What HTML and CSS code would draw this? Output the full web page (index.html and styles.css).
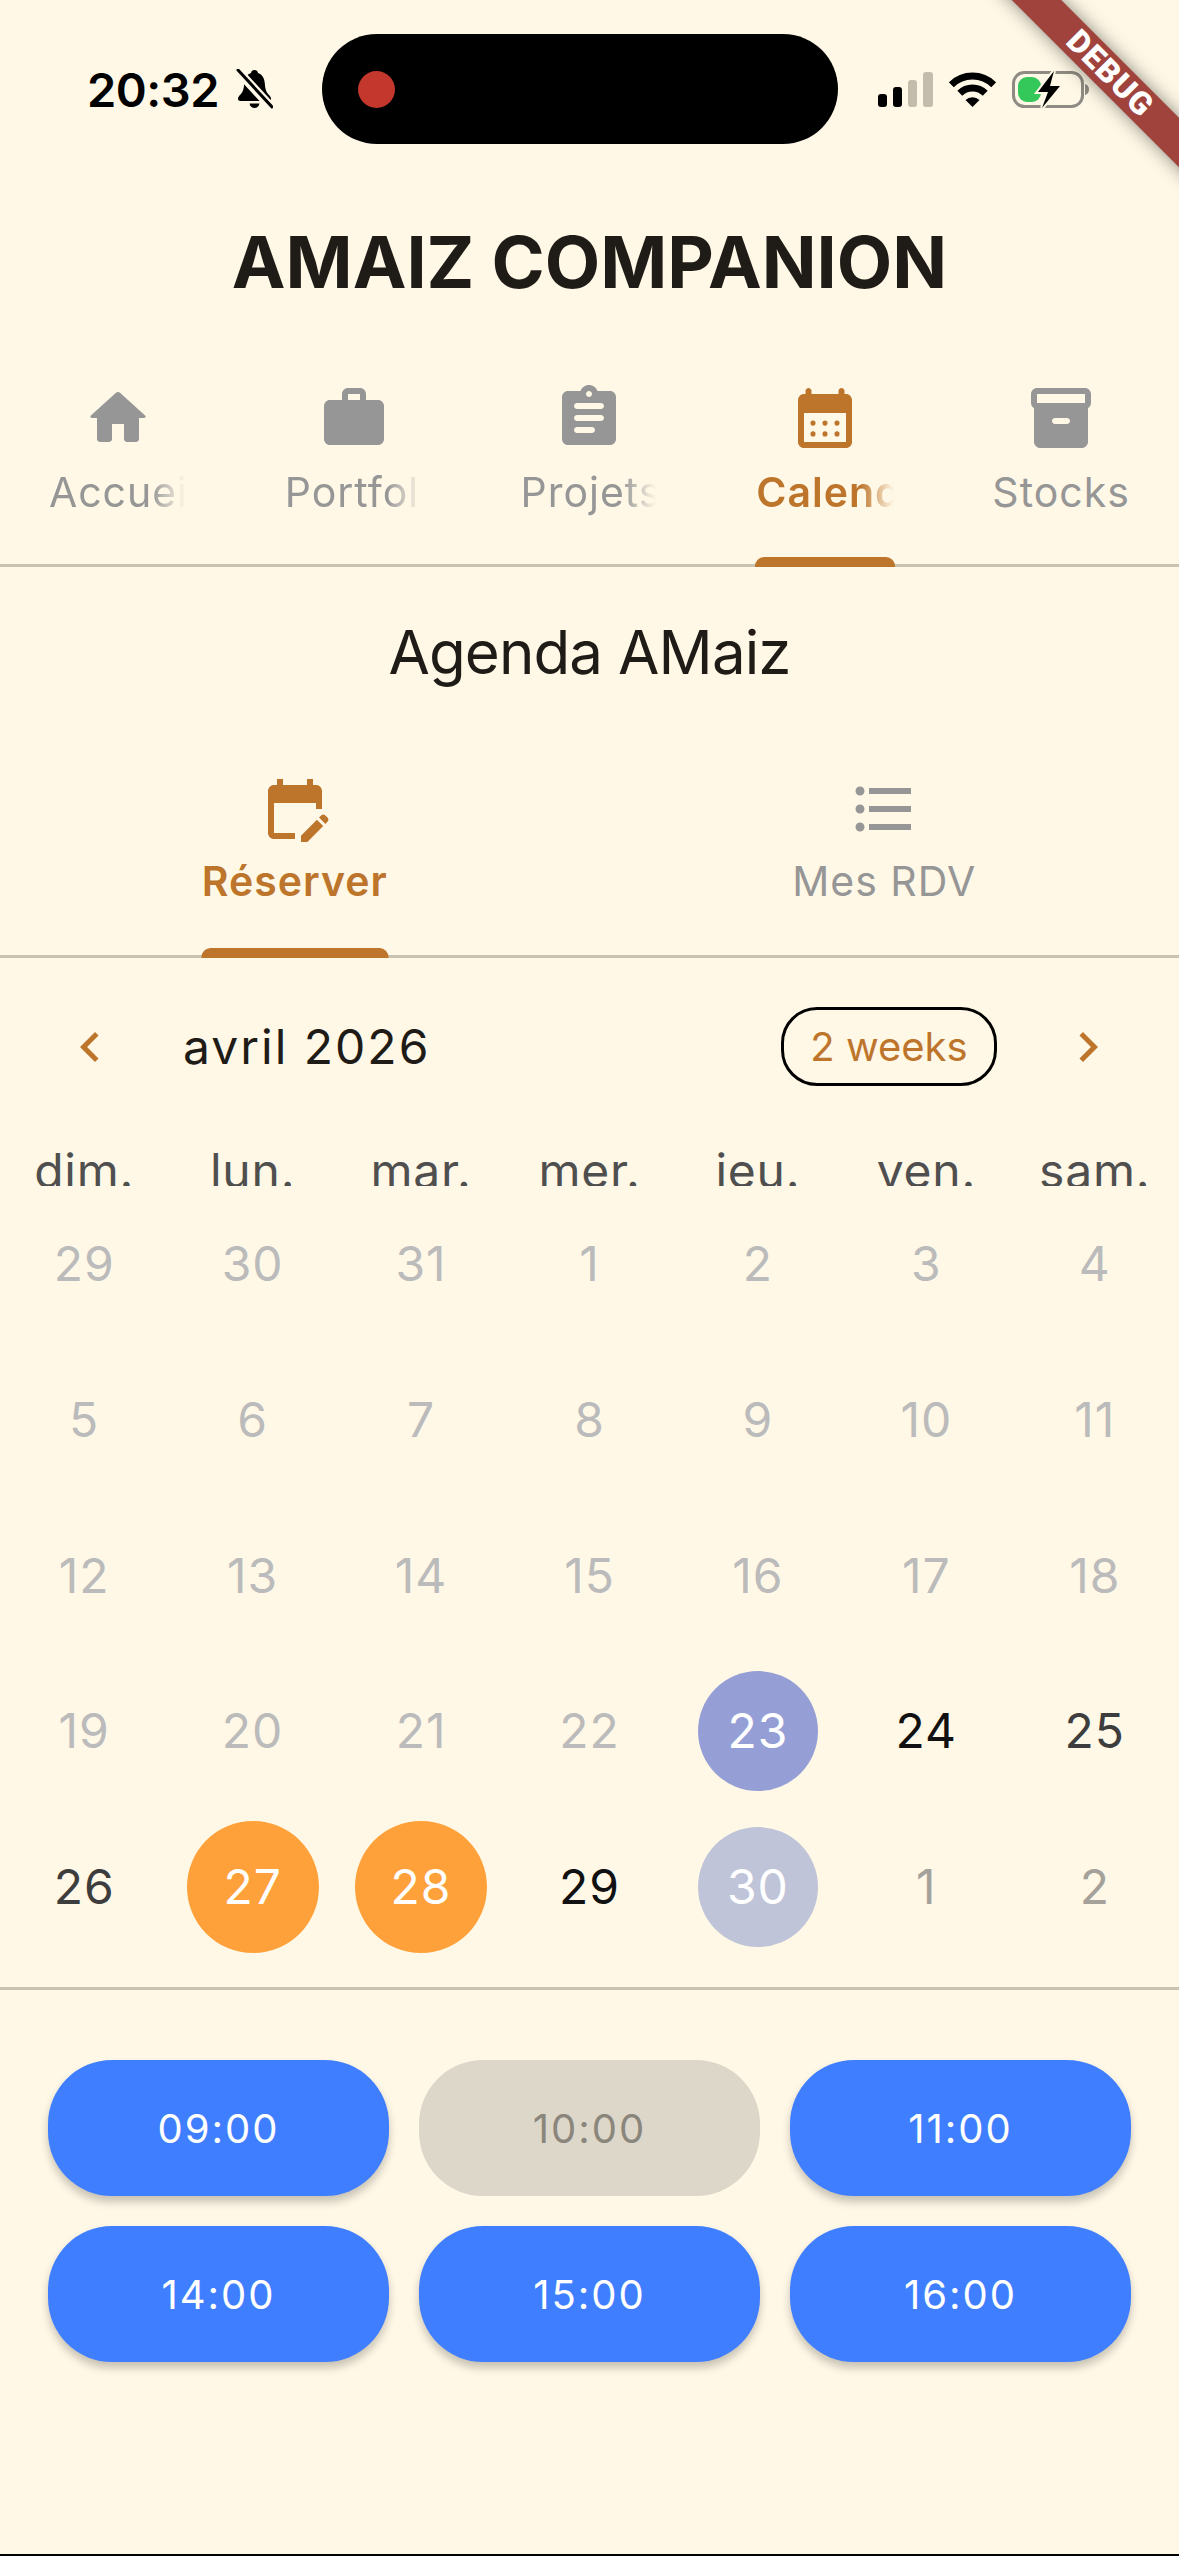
FILE: index.html
```html
<!DOCTYPE html>
<html lang="fr">
<head>
  <meta charset="UTF-8">
  <meta name="viewport" content="width=device-width, initial-scale=1.0">
  <title>AMAIZ Companion - Agenda</title>
  <link rel="stylesheet" href="styles.css">
</head>
<body>
  <div class="debug-banner"><span>DEBUG</span></div>

  <div class="status-bar">
    <div class="status-left">
      <span class="status-time">20:32</span>
      <svg class="bell-icon" viewBox="0 0 37 40">
        <path d="M18.5 1c2 0 3.2 1.300 3.500 3 4.500 1.500 6.500 5.500 6.800 10.500.3 5 1.200 8.500 3.700 11 2 2 2.500 3 2.500 4.200 0 1.300-1 2.300-2.500 2.300H4.500C3 32 2 31 2 29.700c0-1.200.5-2.200 2.500-4.200 2.500-2.500 3.400-6 3.700-11 .3-5 2.300-9 6.800-10.500.3-1.700 1.500-3 3.500-3z"/>
        <path d="M13.500 34.500h10c-.5 2.800-2.500 4.500-5 4.500s-4.500-1.700-5-4.500z"/>
        <path class="bell-gap" d="M1 1l35 38"/>
        <path class="bell-slash" d="M2 1l34 37"/>
      </svg>
    </div>
    <div class="island"><span class="island-dot"></span></div>
    <div class="status-right">
      <svg class="signal-icon" viewBox="0 0 55 35">
        <rect x="0" y="22" width="9" height="13" rx="3"/>
        <rect x="15" y="15" width="9" height="20" rx="3"/>
        <rect class="signal-off" x="30" y="8" width="9" height="27" rx="3"/>
        <rect class="signal-off" x="45" y="0" width="10" height="35" rx="3"/>
      </svg>
      <svg class="wifi-icon" viewBox="0 0 47 35">
        <path class="wifi-arc" d="M2.300 12.800a30 30 0 0 1 42.400 0"/>
        <path class="wifi-arc" d="M10.800 21.300a18 18 0 0 1 25.400 0"/>
        <path d="M23.500 35l-7-7a10 10 0 0 1 14 0z"/>
      </svg>
      <svg class="battery-icon" viewBox="0 0 77 37">
        <rect class="battery-case" x="1.500" y="1.500" width="69" height="34" rx="11"/>
        <path class="battery-tip" d="M73 13c2.500 .5 4 2.500 4 5.500s-1.500 5-4 5.500z"/>
        <rect class="battery-level" x="6" y="6" width="23" height="25" rx="9"/>
        <path class="battery-bolt" d="M42 0L26 21h10l-6 16 18-22H38z"/>
      </svg>
    </div>
  </div>

  <h1 class="app-title">AMAIZ COMPANION</h1>

  <nav class="main-tabs">
    <div class="tab">
      <svg class="icon" viewBox="0 0 24 24"><path d="M10 19v-5h4v5c0 .55.45 1 1 1h3c.55 0 1-.45 1-1v-7h1.700c.46 0 .68-.57.33-.87L12.670 3.600c-.38-.34-.96-.34-1.340 0l-8.360 7.530c-.34.3-.13.87.33.87H5v7c0 .55.45 1 1 1h3c.55 0 1-.45 1-1z"/></svg>
      <span class="tab-label fade">Accueil</span>
    </div>
    <div class="tab">
      <svg class="icon" viewBox="0 0 24 24"><path d="M20 6h-4V4c0-1.110-.89-2-2-2h-4c-1.110 0-2 .89-2 2v2H4c-1.110 0-1.990.89-1.990 2L2 19c0 1.110.89 2 2 2h16c1.110 0 2-.89 2-2V8c0-1.110-.89-2-2-2zm-6 0h-4V4h4v2z"/></svg>
      <span class="tab-label fade">Portfolio</span>
    </div>
    <div class="tab">
      <svg class="icon" viewBox="0 0 24 24"><path d="M19 3h-4.180C14.400 1.840 13.300 1 12 1s-2.400.84-2.820 2H5c-1.100 0-2 .9-2 2v14c0 1.100.9 2 2 2h14c1.100 0 2-.9 2-2V5c0-1.100-.9-2-2-2zm-7 0c.55 0 1 .45 1 1s-.45 1-1 1-1-.45-1-1 .45-1 1-1zm1 14H8c-.55 0-1-.45-1-1s.45-1 1-1h5c.55 0 1 .45 1 1s-.45 1-1 1zm3-4H8c-.55 0-1-.45-1-1s.45-1 1-1h8c.55 0 1 .45 1 1s-.45 1-1 1zm0-4H8c-.55 0-1-.45-1-1s.45-1 1-1h8c.55 0 1 .45 1 1s-.45 1-1 1z"/></svg>
      <span class="tab-label fade">Projets</span>
    </div>
    <div class="tab active">
      <svg class="icon" viewBox="0 0 24 24"><path fill-rule="evenodd" d="M19 4h-.5V3c0-.55-.45-1-1-1s-1 .45-1 1v1h-9V3c0-.55-.45-1-1-1s-1 .45-1 1v1H5C3.890 4 3.010 4.900 3.010 6L3 20c0 1.100.89 2 2 2h14c1.100 0 2-.9 2-2V6c0-1.100-.9-2-2-2zm0 16H5V10.300h14z"/><circle cx="8" cy="13.700" r=".85"/><circle cx="12" cy="13.700" r=".85"/><circle cx="16" cy="13.700" r=".85"/><circle cx="8" cy="17.300" r=".85"/><circle cx="12" cy="17.300" r=".85"/><circle cx="16" cy="17.300" r=".85"/></svg>
      <span class="tab-label fade">Calendrier</span>
    </div>
    <div class="tab">
      <svg class="icon" viewBox="0 0 24 24"><path fill-rule="evenodd" d="M20 2H4C3 2 2 2.900 2 4v3.010c0 .72.43 1.340 1 1.690V20c0 1.100 1.100 2 2 2h14c.9 0 2-.9 2-2V8.700c.57-.35 1-.97 1-1.690V4c0-1.100-1-2-2-2zM14 14h-4c-.55 0-1-.45-1-1s.45-1 1-1h4c.55 0 1 .45 1 1s-.45 1-1 1zm6-7H4V4l16-.02z"/></svg>
      <span class="tab-label">Stocks</span>
    </div>
  </nav>

  <h2 class="page-title">Agenda AMaiz</h2>

  <nav class="sub-tabs">
    <div class="tab active">
      <svg class="icon" viewBox="0 0 24 24"><path d="M5 10h14v2h2V6c0-1.100-.9-2-2-2h-1V2h-2v2H8V2H6v2H5C3.890 4 3.010 4.900 3.010 6L3 20c0 1.100.89 2 2 2h7v-2H5zM22.840 16.280l-.71.71-2.120-2.120.71-.71c.39-.39 1.020-.39 1.410 0l.71.71c.39.39.39 1.020 0 1.410zM19.300 15.580l2.120 2.120L16.120 23H14v-2.120z"/></svg>
      <span class="tab-label">Réserver</span>
    </div>
    <div class="tab">
      <svg class="icon" viewBox="0 0 24 24"><path d="M4 10.500c-.83 0-1.500.67-1.500 1.500s.67 1.500 1.500 1.500 1.500-.67 1.500-1.500-.67-1.500-1.500-1.500zm0-6c-.83 0-1.500.67-1.500 1.500S3.170 7.500 4 7.500 5.500 6.830 5.500 6 4.830 4.500 4 4.500zm0 12c-.83 0-1.500.68-1.500 1.500s.68 1.500 1.500 1.500 1.500-.68 1.500-1.500-.67-1.500-1.500-1.500zM7 19h14v-2H7v2zm0-6h14v-2H7v2zm0-8v2h14V5H7z"/></svg>
      <span class="tab-label">Mes RDV</span>
    </div>
  </nav>

  <section class="calendar">
    <div class="cal-header">
      <svg class="chevron" viewBox="0 0 24 24"><path d="M15.410 7.410 14 6l-6 6 6 6 1.410-1.410L10.830 12z"/></svg>
      <span class="cal-month">avril 2026</span>
      <span class="format-btn">2 weeks</span>
      <svg class="chevron" viewBox="0 0 24 24"><path d="M10 6 8.590 7.410 13.170 12l-4.580 4.590L10 18l6-6z"/></svg>
    </div>

    <div class="week-days">
      <span>dim.</span><span>lun.</span><span>mar.</span><span>mer.</span><span>jeu.</span><span>ven.</span><span>sam.</span>
    </div>

    <div class="days">
      <div class="day off">29</div><div class="day off">30</div><div class="day off">31</div><div class="day off">1</div><div class="day off">2</div><div class="day off">3</div><div class="day off">4</div>
      <div class="day off">5</div><div class="day off">6</div><div class="day off">7</div><div class="day off">8</div><div class="day off">9</div><div class="day off">10</div><div class="day off">11</div>
      <div class="day off">12</div><div class="day off">13</div><div class="day off">14</div><div class="day off">15</div><div class="day off">16</div><div class="day off">17</div><div class="day off">18</div>
      <div class="day off">19</div><div class="day off">20</div><div class="day off">21</div><div class="day off">22</div>
      <div class="day"><span class="mark today">23</span></div>
      <div class="day">24</div><div class="day weekend">25</div>
      <div class="day weekend">26</div>
      <div class="day"><span class="mark booked">27</span></div>
      <div class="day"><span class="mark booked">28</span></div>
      <div class="day">29</div>
      <div class="day"><span class="mark selected">30</span></div>
      <div class="day next">1</div><div class="day next">2</div>
    </div>
  </section>

  <section class="slots">
    <button class="slot">09:00</button>
    <button class="slot taken">10:00</button>
    <button class="slot">11:00</button>
    <button class="slot">14:00</button>
    <button class="slot">15:00</button>
    <button class="slot">16:00</button>
  </section>

  <div class="bottom-edge"></div>
</body>
</html>
```

FILE: styles.css
```css
body {
  font-family: 'Inter', 'Roboto', sans-serif;
  margin: 0;
  width: 1179px;
  height: 2556px;
  overflow: hidden;
  background-color: #fff8e7;
  color: #1f1b16;
  display: flex;
  flex-direction: column;
  position: relative;
}

/* status bar */
.status-bar {
  display: grid;
  grid-template-columns: 322px 516px 1fr;
  height: 110px;
  padding-top: 34px;
}

.status-left {
  display: flex;
  align-items: center;
  gap: 17px;
  padding-left: 87px;
}

.status-time {
  font-size: 47px;
  font-weight: 600;
  letter-spacing: -0.5px;
  color: #000;
  line-height: 1;
}

.bell-icon {
  width: 37px;
  height: 40px;
  fill: #000;
  stroke-linecap: round;
}

.bell-gap {
  stroke: #fff8e7;
  stroke-width: 9;
}

.bell-slash {
  stroke: #000;
  stroke-width: 3;
}

.island {
  display: flex;
  align-items: center;
  padding-left: 36px;
  background-color: #000;
  border-radius: 55px;
}

.island-dot {
  width: 37px;
  height: 37px;
  border-radius: 50%;
  background-color: #c4372c;
}

.status-right {
  display: flex;
  align-items: center;
  padding-left: 40px;
  gap: 16px;
}

.signal-icon {
  width: 55px;
  height: 35px;
  fill: #000;
}

.signal-off {
  fill: #c3bcac;
}

.wifi-icon {
  width: 47px;
  height: 35px;
  fill: #000;
}

.wifi-arc {
  fill: none;
  stroke: #000;
  stroke-width: 7;
}

.battery-icon {
  width: 77px;
  height: 37px;
}

.battery-case {
  fill: none;
  stroke: #8e8b82;
  stroke-width: 3;
}

.battery-tip {
  fill: #8e8b82;
}

.battery-level {
  fill: #34c759;
}

.battery-bolt {
  fill: #000;
  stroke: #fff8e7;
  stroke-width: 4;
  paint-order: stroke;
}

.debug-banner {
  position: absolute;
  top: 0;
  right: 0;
  width: 240px;
  height: 240px;
  overflow: hidden;
  pointer-events: none;
}

.debug-banner span {
  position: absolute;
  top: 56px;
  left: 1px;
  width: 340px;
  height: 35px;
  line-height: 35px;
  text-align: center;
  transform: rotate(45deg);
  background-color: #a0433d;
  color: #fff;
  font-size: 32px;
  font-weight: 900;
  font-family: 'Roboto', sans-serif;
  letter-spacing: 1px;
  box-shadow: 0 0 18px rgba(0, 0, 0, 0.45);
}

/* headings */
.app-title {
  margin: 0;
  padding-top: 74px;
  font-size: 72px;
  line-height: 88px;
  font-weight: 700;
  text-align: center;
}

.page-title {
  margin: 0;
  height: 170px;
  line-height: 170px;
  font-size: 60px;
  font-weight: 400;
  letter-spacing: -0.9px;
  text-align: center;
}

/* tabs */
.main-tabs,
.sub-tabs {
  display: flex;
  border-bottom: 3px solid #c9c2b0;
}

.main-tabs {
  height: 182px;
  padding-top: 76px;
}

.sub-tabs {
  height: 182px;
  padding-top: 36px;
}

.tab {
  flex: 1;
  display: flex;
  flex-direction: column;
  align-items: center;
  position: relative;
  color: #969696;
}

.main-tabs .tab {
  gap: 13px;
}

.sub-tabs .tab {
  gap: 11px;
}

.tab .icon {
  width: 72px;
  height: 72px;
  fill: currentColor;
}

.tab-label {
  font-size: 41px;
  line-height: 50px;
  letter-spacing: 1px;
  white-space: nowrap;
}

.tab-label.fade {
  width: 136px;
  margin-right: 2px;
  overflow: hidden;
  -webkit-mask-image: linear-gradient(90deg, #000 calc(100% - 34px), transparent);
  mask-image: linear-gradient(90deg, #000 calc(100% - 34px), transparent);
}

.tab.active {
  color: #bd752c;
}

.tab.active .tab-label {
  font-weight: 600;
}

.tab.active .tab-label.fade {
  width: 138px;
  margin-right: 0;
}

.tab.active::after {
  content: "";
  position: absolute;
  bottom: -3px;
  left: 50%;
  transform: translateX(-50%);
  height: 10px;
  background-color: #bd752c;
  border-radius: 9px 9px 0 0;
}

.main-tabs .tab.active::after {
  width: 140px;
}

.sub-tabs .tab.active::after {
  width: 187px;
}

/* calendar */
.calendar {
  padding-bottom: 23px;
  border-bottom: 3px solid #c9c2b0;
}

.cal-header {
  display: flex;
  align-items: center;
  height: 79px;
  margin-top: 49px;
  padding: 0 61px 0 60px;
}

.chevron {
  width: 60px;
  height: 60px;
  fill: #bd752c;
}

.cal-month {
  flex: 1;
  margin-left: 63px;
  font-size: 48px;
  letter-spacing: 2px;
}

.format-btn {
  box-sizing: border-box;
  width: 216px;
  height: 79px;
  margin-right: 61px;
  border: 3px solid #000;
  border-radius: 36px;
  display: flex;
  align-items: center;
  justify-content: center;
  font-size: 40px;
  color: #bd752c;
}

.week-days {
  display: grid;
  grid-template-columns: repeat(7, 1fr);
  height: 44px;
  margin-top: 56px;
  overflow: hidden;
  font-size: 48px;
  line-height: 58px;
  letter-spacing: 0.8px;
  text-align: center;
  color: #4f4f4f;
}

.days {
  display: grid;
  grid-template-columns: repeat(7, 1fr);
  grid-auto-rows: 155.7px;
  font-size: 48px;
  letter-spacing: 1px;
  color: #111;
}

.day {
  display: flex;
  align-items: center;
  justify-content: center;
}

.day.off {
  color: #bbb;
}

.day.weekend {
  color: #3d3d3d;
}

.day.next {
  color: #a5a29b;
}

.mark {
  display: flex;
  align-items: center;
  justify-content: center;
  border-radius: 50%;
  color: #fff;
}

.mark.today {
  width: 120px;
  height: 120px;
  background-color: #959fd5;
}

.mark.selected {
  width: 120px;
  height: 120px;
  background-color: #bfc4d9;
}

.mark.booked {
  width: 132px;
  height: 132px;
  background-color: #ffa13a;
}

/* time slots */
.slots {
  display: grid;
  grid-template-columns: repeat(3, 1fr);
  grid-auto-rows: 136px;
  gap: 30px;
  padding: 70px 48px 0;
}

.slot {
  border: none;
  border-radius: 64px;
  background-color: #3f7fff;
  color: #fff;
  font-family: inherit;
  font-size: 40px;
  letter-spacing: 2px;
  box-shadow: 0 6px 9px rgba(0, 0, 0, 0.22);
}

.slot.taken {
  background-color: #ddd7ca;
  color: #8a867c;
  box-shadow: none;
}

.bottom-edge {
  margin-top: auto;
  height: 2px;
  background-color: #000;
}
```
